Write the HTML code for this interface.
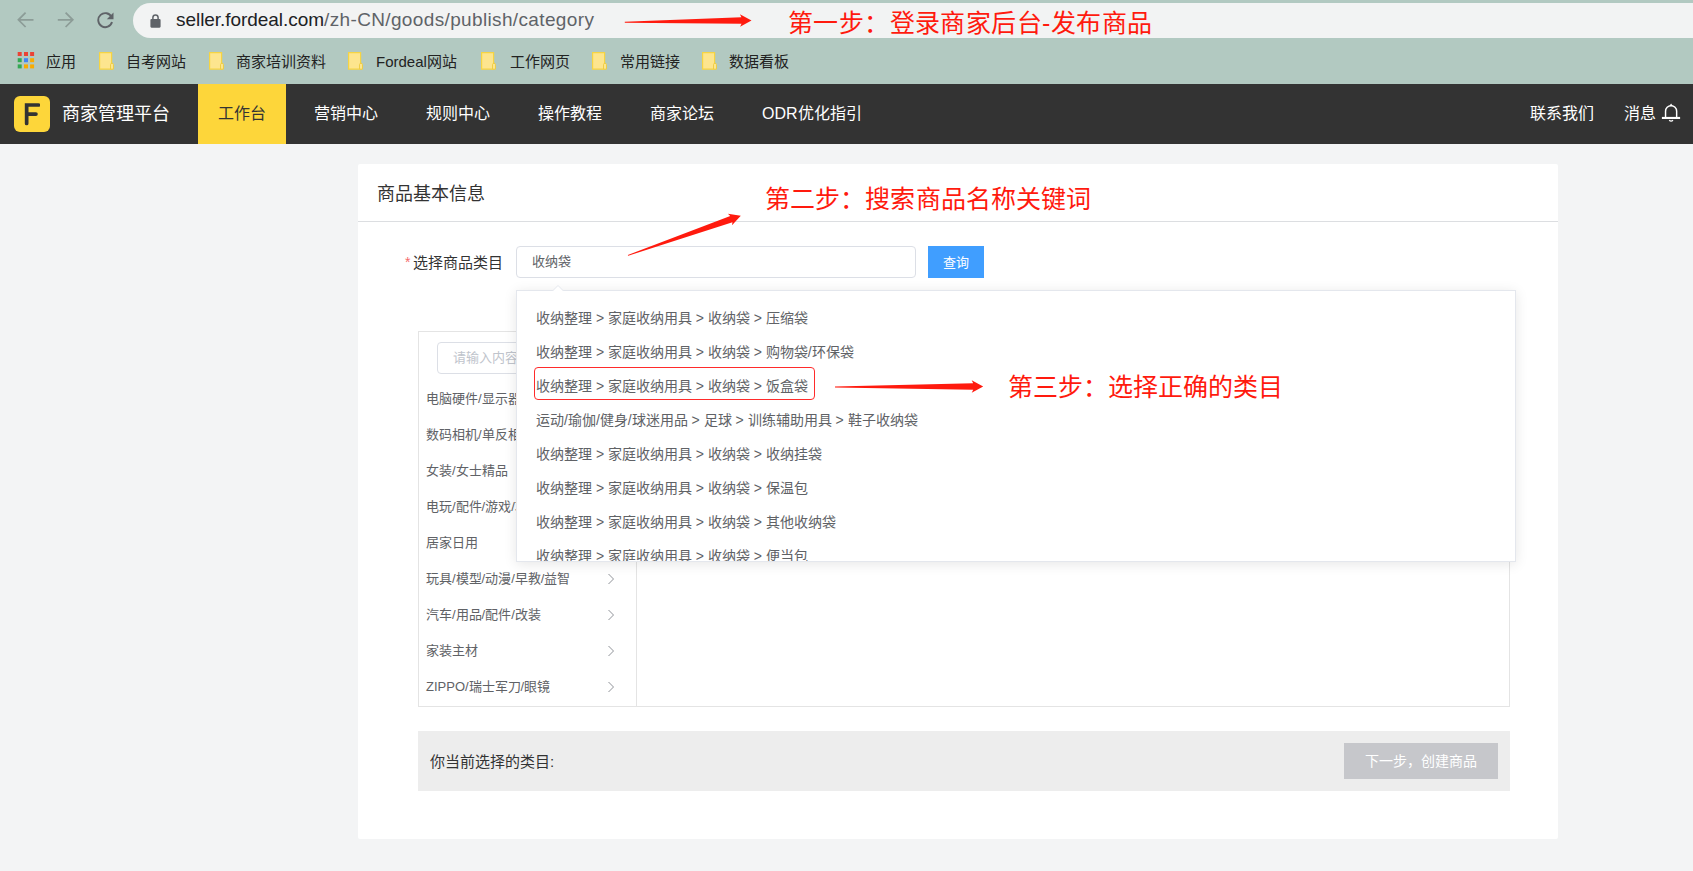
<!DOCTYPE html>
<html lang="zh-CN">
<head>
<meta charset="utf-8">
<style>
*{box-sizing:border-box;margin:0;padding:0}
html,body{width:1693px;height:871px;overflow:hidden}
body{position:relative;background:#f3f4f5;font-family:"Liberation Sans",sans-serif;color:#333}
.abs{position:absolute;white-space:nowrap}
#chrome{position:absolute;left:0;top:0;width:1693px;height:84px;background:#b2c9c1}
#pill{position:absolute;left:133px;top:3px;width:1600px;height:35px;border-radius:17.5px;background:#f2f3f3}
#url{position:absolute;left:176px;top:8px;font-size:19px;letter-spacing:-0.05px;line-height:24px;color:#202124}
#url span{color:#5f6368;letter-spacing:0.36px}
.bm{position:absolute;top:53px;font-size:15px;line-height:18px;color:#222}
.fold{position:absolute;top:52px;width:15px;height:18px}
#nav{position:absolute;left:0;top:84px;width:1693px;height:60px;background:#333}
.nv{position:absolute;top:0;height:60px;line-height:60px;font-size:16px;color:#fff}
#card{position:absolute;left:358px;top:164px;width:1200px;height:675px;background:#fff;border-radius:2px}
.red{color:#ff1a0e;font-size:25px;line-height:30px}
</style>
</head>
<body>
<div id="chrome">
  <!-- back -->
  <svg class="abs" style="left:16px;top:11px" width="20" height="18" viewBox="0 0 20 18"><path d="M17.5 8.8H2.6 M9.6 1.6 L2.4 8.8 L9.6 16" stroke="#8c9c97" stroke-width="1.75" fill="none"/></svg>
  <svg class="abs" style="left:56px;top:11px" width="20" height="18" viewBox="0 0 20 18"><path d="M1.8 8.8H16.8 M9.6 1.6 L16.8 8.8 L9.6 16" stroke="#8c9c97" stroke-width="1.75" fill="none"/></svg>
  <svg class="abs" style="left:96px;top:11px" width="20" height="18" viewBox="0 0 20 18"><path d="M15.6 6.2 A7 7 0 1 0 16 11" stroke="#5f6368" stroke-width="1.9" fill="none"/><path d="M17.5 1.5 V8.2 H10.8 Z" fill="#5f6368"/></svg>
  <div id="pill"></div>
  <svg class="abs" style="left:150px;top:13px" width="12" height="15" viewBox="0 0 12 15"><path d="M2.9 6.5V4.6A2.6 2.6 0 0 1 8.1 4.6V6.5" stroke="#5f6368" stroke-width="1.5" fill="none"/><rect x="0.4" y="6" width="10.2" height="8.7" rx="1.1" fill="#5f6368"/></svg>
  <svg class="abs" style="left:17px;top:52px" width="18" height="17" viewBox="0 0 18 17">
    <rect x="0.7" y="0" width="4" height="4" fill="#ea4335"/><rect x="7" y="0" width="4" height="4" fill="#ea4335"/><rect x="13.1" y="0" width="4" height="4" fill="#ea4335"/>
    <rect x="0.7" y="6.2" width="4" height="4" fill="#34a853"/><rect x="7" y="6.2" width="4" height="4" fill="#4285f4"/><rect x="13.1" y="6.2" width="4" height="4" fill="#f9ab00"/>
    <rect x="0.7" y="12.4" width="4" height="4" fill="#34a853"/><rect x="7" y="12.4" width="4" height="4" fill="#f9ab00"/><rect x="13.1" y="12.4" width="4" height="4" fill="#f9ab00"/>
  </svg>
  <div class="bm" style="left:46px">应用</div>
  <svg class="fold" style="left:99px" viewBox="0 0 15 18"><path d="M0.6 0.6H12.6V17.2H0.6Z" fill="#fde58e" stroke="#f6d443" stroke-width="1.2"/><path d="M11.6 17.2V12.6A1.4 1.4 0 0 1 14.4 12.6V17.2Z" fill="#fde99a" stroke="#efcb3c" stroke-width="1"/></svg>
  <div class="bm" style="left:126px">自考网站</div>
  <svg class="fold" style="left:209px" viewBox="0 0 15 18"><path d="M0.6 0.6H12.6V17.2H0.6Z" fill="#fde58e" stroke="#f6d443" stroke-width="1.2"/><path d="M11.6 17.2V12.6A1.4 1.4 0 0 1 14.4 12.6V17.2Z" fill="#fde99a" stroke="#efcb3c" stroke-width="1"/></svg>
  <div class="bm" style="left:236px">商家培训资料</div>
  <svg class="fold" style="left:348px" viewBox="0 0 15 18"><path d="M0.6 0.6H12.6V17.2H0.6Z" fill="#fde58e" stroke="#f6d443" stroke-width="1.2"/><path d="M11.6 17.2V12.6A1.4 1.4 0 0 1 14.4 12.6V17.2Z" fill="#fde99a" stroke="#efcb3c" stroke-width="1"/></svg>
  <div class="bm" style="left:376px">Fordeal网站</div>
  <svg class="fold" style="left:481px" viewBox="0 0 15 18"><path d="M0.6 0.6H12.6V17.2H0.6Z" fill="#fde58e" stroke="#f6d443" stroke-width="1.2"/><path d="M11.6 17.2V12.6A1.4 1.4 0 0 1 14.4 12.6V17.2Z" fill="#fde99a" stroke="#efcb3c" stroke-width="1"/></svg>
  <div class="bm" style="left:510px">工作网页</div>
  <svg class="fold" style="left:592px" viewBox="0 0 15 18"><path d="M0.6 0.6H12.6V17.2H0.6Z" fill="#fde58e" stroke="#f6d443" stroke-width="1.2"/><path d="M11.6 17.2V12.6A1.4 1.4 0 0 1 14.4 12.6V17.2Z" fill="#fde99a" stroke="#efcb3c" stroke-width="1"/></svg>
  <div class="bm" style="left:620px">常用链接</div>
  <svg class="fold" style="left:702px" viewBox="0 0 15 18"><path d="M0.6 0.6H12.6V17.2H0.6Z" fill="#fde58e" stroke="#f6d443" stroke-width="1.2"/><path d="M11.6 17.2V12.6A1.4 1.4 0 0 1 14.4 12.6V17.2Z" fill="#fde99a" stroke="#efcb3c" stroke-width="1"/></svg>
  <div class="bm" style="left:729px">数据看板</div>
  <div id="url">seller.fordeal.com<span>/zh-CN/goods/publish/category</span></div>
</div>
<div id="nav">
  <div class="abs" style="left:14px;top:12px;width:36px;height:36px;border-radius:6px;background:#fdd63a"></div>
  <svg class="abs" style="left:24px;top:18px" width="16" height="24" viewBox="0 0 16 24"><path d="M2.65 21.45V3H14.45 M2.65 12.1H11.95" stroke="#333" stroke-width="3.7" fill="none" stroke-linejoin="miter" stroke-linecap="round"/></svg>
  <div class="nv" style="left:62px;font-size:18px">商家管理平台</div>
  <div class="nv" style="left:198px;width:88px;background:#fdd63a;color:#333;text-align:center">工作台</div>
  <div class="nv" style="left:314px">营销中心</div>
  <div class="nv" style="left:426px">规则中心</div>
  <div class="nv" style="left:538px">操作教程</div>
  <div class="nv" style="left:650px">商家论坛</div>
  <div class="nv" style="left:762px">ODR优化指引</div>
  <div class="nv" style="left:1530px">联系我们</div>
  <div class="nv" style="left:1624px">消息</div>
  <svg class="abs" style="left:1661px;top:19px" width="20" height="20" viewBox="0 0 20 20"><path d="M4.55 14.5V8.2A5.55 5.55 0 0 1 15.65 8.2V14.5" stroke="#fff" stroke-width="1.45" fill="none"/><path d="M8.3 2.9L10.1 0.5L11.9 2.9Z" fill="#fff"/><path d="M0.9 14.95H19.1" stroke="#fff" stroke-width="2.1"/><path d="M8.2 17.3Q10.1 18.9 12 17.3" stroke="#fff" stroke-width="1.3" fill="none"/></svg>
</div>
<div id="card">
  <div class="abs" style="left:19px;top:17px;font-size:18px;line-height:26px;color:#333">商品基本信息</div>
  <div class="abs" style="left:0;top:57px;width:1200px;height:1px;background:#dcdee1"></div>
  <div class="abs" style="left:47px;top:87px;font-size:14px;line-height:22px;color:#f56c6c">*</div>
  <div class="abs" style="left:55px;top:88px;font-size:15px;line-height:22px;color:#333">选择商品类目</div>
  <div class="abs" style="left:158px;top:82px;width:400px;height:32px;border:1px solid #dcdfe6;border-radius:4px"></div>
  <div class="abs" style="left:174px;top:89px;font-size:13px;line-height:18px;color:#606266">收纳袋</div>
  <div class="abs" style="left:570px;top:82px;width:56px;height:32px;background:#409eff;color:#fff;font-size:13px;line-height:34px;text-align:center">查询</div>
  <!-- category panel -->
  <div class="abs" style="left:60px;top:167px;width:1092px;height:376px;border:1px solid #e4e4e4"></div>
  <div class="abs" style="left:278px;top:168px;width:1px;height:374px;background:#e4e4e4"></div>
  <div class="abs" style="left:79px;top:178px;width:180px;height:32px;border:1px solid #dcdfe6;border-radius:4px"></div>
  <div class="abs" style="left:95px;top:185px;font-size:13px;line-height:18px;color:#c0c4cc">请输入内容</div>
  <div class="abs" style="left:68px;top:226px;font-size:13px;line-height:18px;color:#606266">电脑硬件/显示器</div>
  <svg class="abs" style="left:249px;top:229px" width="8" height="12" viewBox="0 0 8 12"><path d="M1.5 1 L6.5 6 L1.5 11" stroke="#909399" stroke-width="1" fill="none"/></svg>
  <div class="abs" style="left:68px;top:262px;font-size:13px;line-height:18px;color:#606266">数码相机/单反相机</div>
  <svg class="abs" style="left:249px;top:265px" width="8" height="12" viewBox="0 0 8 12"><path d="M1.5 1 L6.5 6 L1.5 11" stroke="#909399" stroke-width="1" fill="none"/></svg>
  <div class="abs" style="left:68px;top:298px;font-size:13px;line-height:18px;color:#606266">女装/女士精品</div>
  <svg class="abs" style="left:249px;top:301px" width="8" height="12" viewBox="0 0 8 12"><path d="M1.5 1 L6.5 6 L1.5 11" stroke="#909399" stroke-width="1" fill="none"/></svg>
  <div class="abs" style="left:68px;top:334px;font-size:13px;line-height:18px;color:#606266">电玩/配件/游戏/攻略</div>
  <svg class="abs" style="left:249px;top:337px" width="8" height="12" viewBox="0 0 8 12"><path d="M1.5 1 L6.5 6 L1.5 11" stroke="#909399" stroke-width="1" fill="none"/></svg>
  <div class="abs" style="left:68px;top:370px;font-size:13px;line-height:18px;color:#606266">居家日用</div>
  <svg class="abs" style="left:249px;top:373px" width="8" height="12" viewBox="0 0 8 12"><path d="M1.5 1 L6.5 6 L1.5 11" stroke="#909399" stroke-width="1" fill="none"/></svg>
  <div class="abs" style="left:68px;top:406px;font-size:13px;line-height:18px;color:#606266">玩具/模型/动漫/早教/益智</div>
  <svg class="abs" style="left:249px;top:409px" width="8" height="12" viewBox="0 0 8 12"><path d="M1.5 1 L6.5 6 L1.5 11" stroke="#909399" stroke-width="1" fill="none"/></svg>
  <div class="abs" style="left:68px;top:442px;font-size:13px;line-height:18px;color:#606266">汽车/用品/配件/改装</div>
  <svg class="abs" style="left:249px;top:445px" width="8" height="12" viewBox="0 0 8 12"><path d="M1.5 1 L6.5 6 L1.5 11" stroke="#909399" stroke-width="1" fill="none"/></svg>
  <div class="abs" style="left:68px;top:478px;font-size:13px;line-height:18px;color:#606266">家装主材</div>
  <svg class="abs" style="left:249px;top:481px" width="8" height="12" viewBox="0 0 8 12"><path d="M1.5 1 L6.5 6 L1.5 11" stroke="#909399" stroke-width="1" fill="none"/></svg>
  <div class="abs" style="left:68px;top:514px;font-size:13px;line-height:18px;color:#606266">ZIPPO/瑞士军刀/眼镜</div>
  <svg class="abs" style="left:249px;top:517px" width="8" height="12" viewBox="0 0 8 12"><path d="M1.5 1 L6.5 6 L1.5 11" stroke="#909399" stroke-width="1" fill="none"/></svg>
  <div class="abs" style="left:60px;top:567px;width:1092px;height:60px;background:#ededed"></div>
  <div class="abs" style="left:72px;top:588px;font-size:15px;line-height:20px;color:#333">你当前选择的类目:</div>
  <div class="abs" style="left:986px;top:579px;width:154px;height:36px;background:#c6c7cb;color:#fff;font-size:14px;line-height:36px;text-align:center">下一步，创建商品</div>
</div>
<div id="dd" class="abs" style="left:516px;top:290px;width:1000px;height:272px;background:#fff;border:1px solid #e4e7ed;box-shadow:0 2px 12px 0 rgba(0,0,0,.1);overflow:hidden">
  <div class="abs" style="left:19px;top:17px;font-size:14px;line-height:20px;color:#606266">收纳整理 &gt; 家庭收纳用具 &gt; 收纳袋 &gt; 压缩袋</div>
  <div class="abs" style="left:19px;top:51px;font-size:14px;line-height:20px;color:#606266">收纳整理 &gt; 家庭收纳用具 &gt; 收纳袋 &gt; 购物袋/环保袋</div>
  <div class="abs" style="left:19px;top:85px;font-size:14px;line-height:20px;color:#606266">收纳整理 &gt; 家庭收纳用具 &gt; 收纳袋 &gt; 饭盒袋</div>
  <div class="abs" style="left:19px;top:119px;font-size:14px;line-height:20px;color:#606266">运动/瑜伽/健身/球迷用品 &gt; 足球 &gt; 训练辅助用具 &gt; 鞋子收纳袋</div>
  <div class="abs" style="left:19px;top:153px;font-size:14px;line-height:20px;color:#606266">收纳整理 &gt; 家庭收纳用具 &gt; 收纳袋 &gt; 收纳挂袋</div>
  <div class="abs" style="left:19px;top:187px;font-size:14px;line-height:20px;color:#606266">收纳整理 &gt; 家庭收纳用具 &gt; 收纳袋 &gt; 保温包</div>
  <div class="abs" style="left:19px;top:221px;font-size:14px;line-height:20px;color:#606266">收纳整理 &gt; 家庭收纳用具 &gt; 收纳袋 &gt; 其他收纳袋</div>
  <div class="abs" style="left:19px;top:255px;font-size:14px;line-height:20px;color:#606266">收纳整理 &gt; 家庭收纳用具 &gt; 收纳袋 &gt; 便当包</div>
</div>
<svg class="abs" style="left:550px;top:284px" width="16" height="8" viewBox="0 0 16 8"><path d="M2 7.5 L8 1.5 L14 7.5" fill="#fff" stroke="#e4e7ed" stroke-width="1"/><rect x="0" y="7" width="16" height="1" fill="#fff"/></svg>
<div class="abs" style="left:534px;top:367px;width:281px;height:33px;border:1px solid #ff2b2b;border-radius:4px"></div>
<div class="abs red" style="left:788px;top:8px;letter-spacing:0.4px">第一步：登录商家后台-发布商品</div>
<div class="abs red" style="left:765px;top:184px;letter-spacing:0.1px">第二步：搜索商品名称关键词</div>
<div class="abs red" style="left:1008px;top:372px">第三步：选择正确的类目</div>
<svg class="abs" style="left:0;top:0" width="1693" height="871" viewBox="0 0 1693 871">
  <g fill="#ff1a0e">
    <path d="M624.79 21.80 L741.45 17.25 L739.91 14.37 L751.50 20.40 L740.09 26.77 L741.55 23.85 L624.81 22.80 Z"/>
    <path d="M627.83 254.93 L730.27 215.91 L727.89 213.67 L740.80 215.70 L732.01 225.37 L732.46 222.13 L628.17 255.87 Z"/>
    <path d="M835.00 386.60 L973.18 383.15 L971.67 380.25 L983.20 386.40 L971.73 392.65 L973.22 389.75 L835.00 387.60 Z"/>
  </g>
</svg>
</body>
</html>
